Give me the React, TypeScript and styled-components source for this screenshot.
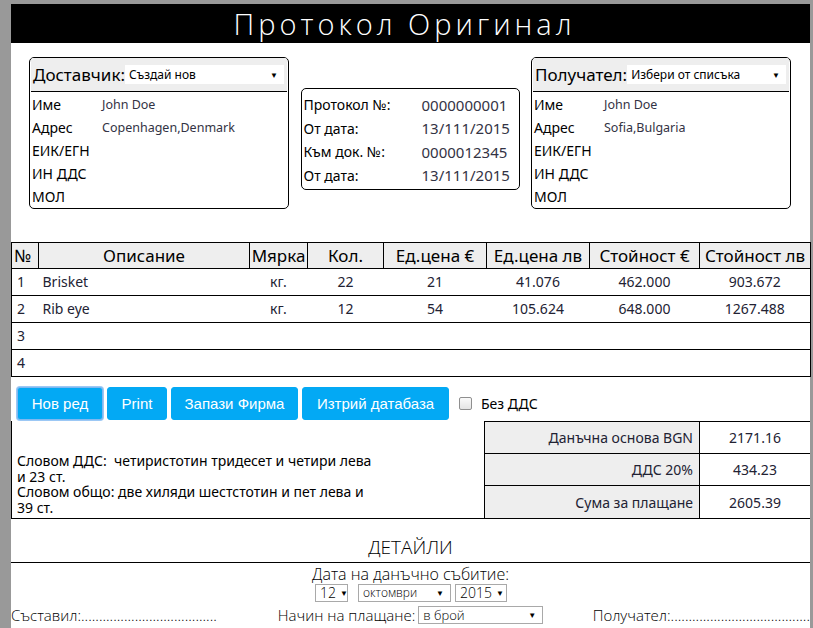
import React from "react";
import styled, { createGlobalStyle } from "styled-components";

const Global = createGlobalStyle`
  html, body { margin: 0; padding: 0; background: #999999; }
  body { font-family: "Noto Sans", "Open Sans", sans-serif; color: #000; overflow: hidden; }
  * { box-sizing: border-box; }
`;

const Page = styled.div`
  width: 799px;
  margin: 4px 0 0 11px;
  background: #fff;
  min-height: 640px;
`;

const TitleBar = styled.div`
  height: 39px;
  background: #000;
  color: #fff;
  display: flex;
  align-items: center;
  justify-content: center;
  padding-right: 12px;
  font-family: "Open Sans", sans-serif;
  font-weight: 300;
  font-size: 29px;
  letter-spacing: 4px;
  line-height: 1;
`;

const TopSection = styled.div`
  display: flex;
  justify-content: space-between;
  align-items: flex-start;
  padding: 14px 19px 33px 18px;
`;

const PartyBox = styled.div`
  width: 260px;
  height: 152px;
  border: 1px solid #000;
  border-radius: 5px;
  overflow: hidden;
`;

const PartyHead = styled.div`
  display: flex;
  align-items: center;
  height: 34px;
  background: #eeeeee;
  border-bottom: 1px solid #000;
  margin: 0 1px;
  padding: 0 3px 0 2px;
`;

const PartyLabel = styled.span`
  font-size: 17px;
  line-height: 1;
`;

const FakeSelect = styled.div<{ $w?: number; $h?: number; $bordered?: boolean; $fs?: number }>`
  display: flex;
  align-items: center;
  justify-content: space-between;
  background: #fff;
  width: ${(p) => (p.$w ? `${p.$w}px` : "auto")};
  flex: ${(p) => (p.$w ? "none" : "1")};
  height: ${(p) => p.$h ?? 19}px;
  border: ${(p) => (p.$bordered ? "1px solid #a9a9a9" : "none")};
  padding: 0 6px 0 4px;
  font-size: ${(p) => p.$fs ?? 12}px;
  line-height: 1;
  color: #000;
  overflow: hidden;
  white-space: nowrap;
`;

const Arrow = styled.span`
  font-family: "Noto Sans", sans-serif;
  font-size: 8px;
  margin-left: 4px;
`;

const InfoRows = styled.div`
  padding: 1px 0 0 2px;
`;

const InfoRow = styled.div<{ $labelW: number; $h: number }>`
  display: grid;
  grid-template-columns: ${(p) => p.$labelW}px 1fr;
  height: ${(p) => p.$h}px;
  align-items: center;
  font-size: 14px;
`;

const InfoValue = styled.span<{ $fs?: number }>`
  color: #333344;
  font-size: ${(p) => p.$fs ?? 12.5}px;
`;

const ProtoBox = styled.div`
  margin-top: 31px;
  width: 219px;
  height: 102px;
  border: 1px solid #000;
  border-radius: 5px;
  padding: 4px 0 0 2px;
`;

const Table = styled.table`
  width: 799px;
  border-collapse: collapse;
  table-layout: fixed;
  border: 1px solid #000;
`;

const Th = styled.th<{ $left?: boolean }>`
  height: 26px;
  padding: 0 ${(p) => (p.$left ? "2px" : "0")};
  background: #eeeeee;
  border: 1px solid #000;
  font-weight: 400;
  font-size: 17px;
  text-align: ${(p) => (p.$left ? "left" : "center")};
  white-space: nowrap;
  overflow: hidden;
  line-height: 1;
`;

const Td = styled.td<{ $align?: string; $pl?: number }>`
  height: 27px;
  border-top: 1px solid #000;
  border-bottom: 1px solid #000;
  padding: 0 0 0 ${(p) => p.$pl ?? 0}px;
  font-size: 14px;
  color: #222233;
  text-align: ${(p) => p.$align ?? "center"};
  line-height: 1;
`;

const ButtonRow = styled.div`
  display: flex;
  align-items: center;
  gap: 4px;
  padding: 10px 0 0 6px;
`;

const Button = styled.button<{ $w: number; $focus?: boolean }>`
  width: ${(p) => p.$w}px;
  height: 33px;
  background: #03a9f4;
  border: 1px solid ${(p) => (p.$focus ? "#7fb8f0" : "#03a9f4")};
  box-shadow: ${(p) => (p.$focus ? "0 0 0 1px #9cc8f5" : "none")};
  border-radius: 3px;
  color: #fff;
  font-family: "Liberation Sans", Arial, sans-serif;
  font-size: 15px;
  padding: 0;
`;

const CheckLabel = styled.label`
  display: flex;
  align-items: center;
  margin-left: 6px;
  font-size: 14px;
  gap: 9px;
`;

const Check = styled.span`
  width: 13px;
  height: 13px;
  border: 1px solid #8f8f8f;
  border-radius: 2px;
  background: linear-gradient(#fafafa, #e4e4e4);
`;

const SumSection = styled.div`
  display: flex;
  align-items: flex-end;
  border-bottom: 1px solid #000;
  border-left: 1px solid #000;
  margin-top: 1px;
`;

const Words = styled.div`
  flex: 1;
  padding: 0 0 3px 5px;
  font-size: 14px;
  line-height: 15.5px;
`;

const WordsInner = styled.div`
  width: 363px;
`;

const Totals = styled.div`
  display: grid;
  grid-template-columns: 215px 110px;
  border-top: 1px solid #000;
  border-left: 1px solid #000;
`;

const TotLabel = styled.div<{ $last?: boolean }>`
  height: 32px;
  background: #eeeeee;
  display: flex;
  align-items: center;
  justify-content: flex-end;
  padding-right: 6px;
  border-right: 1px solid #000;
  border-bottom: ${(p) => (p.$last ? "none" : "1px solid #000")};
  font-size: 14px;
  color: #222233;
`;

const TotValue = styled.div<{ $last?: boolean }>`
  height: 32px;
  display: flex;
  align-items: center;
  justify-content: center;
  border-bottom: ${(p) => (p.$last ? "none" : "1px solid #000")};
  font-size: 14px;
  color: #222233;
`;

const Details = styled.div`
  height: 44px;
  border-bottom: 1px solid #000;
  display: flex;
  align-items: flex-end;
  justify-content: center;
  padding-bottom: 5px;
  font-family: "Open Sans", sans-serif;
  font-weight: 300;
  font-size: 19px;
  line-height: 1;
`;

const Light = styled.div`
  font-family: "Open Sans", sans-serif;
  font-weight: 300;
  font-size: 16px;
  line-height: 1;
`;

const DateBlock = styled(Light)`
  display: flex;
  flex-direction: column;
  align-items: center;
  padding-top: 2px;
`;

const DateLabel = styled.div`
  line-height: 18px;
`;

const SelectRow = styled.div`
  display: flex;
  margin-left: 1px;
  margin-top: 1px;
`;

const Gap = styled.span<{ $w: number }>`
  width: ${(p) => p.$w}px;
`;

const FootRow = styled(Light)`
  display: grid;
  grid-template-columns: 1fr auto 1fr;
  align-items: end;
  margin-top: 4px;
  font-size: 15px;
`;

const FootLeft = styled.div`
  padding-bottom: 1px;
`;

const FootCenter = styled.div`
  display: flex;
  align-items: center;
  gap: 3px;
`;

const FootRight = styled.div`
  text-align: right;
  padding-bottom: 1px;
`;

const infoLabels = ["Име", "Адрес", "ЕИК/ЕГН", "ИН ДДС", "МОЛ"];

function Party({ label, select, values }: { label: string; select: string; values: string[] }) {
  return (
    <PartyBox>
      <PartyHead>
        <PartyLabel>{label}</PartyLabel>
        <FakeSelect>
          <span>{select}</span>
          <Arrow>▼</Arrow>
        </FakeSelect>
      </PartyHead>
      <InfoRows>
        {infoLabels.map((l, i) => (
          <InfoRow key={l} $labelW={70} $h={23}>
            <span>{l}</span>
            <InfoValue>{values[i] ?? ""}</InfoValue>
          </InfoRow>
        ))}
      </InfoRows>
    </PartyBox>
  );
}

const protoRows = [
  ["Протокол №:", "0000000001"],
  ["От дата:", "13/111/2015"],
  ["Към док. №:", "0000012345"],
  ["От дата:", "13/111/2015"],
];

const rows = [
  ["1", "Brisket", "кг.", "22", "21", "41.076", "462.000", "903.672"],
  ["2", "Rib eye", "кг.", "12", "54", "105.624", "648.000", "1267.488"],
  ["3", "", "", "", "", "", "", ""],
  ["4", "", "", "", "", "", "", ""],
];

const colW = [27, 211, 58, 76, 103, 103, 110, 111];
const heads = ["№", "Описание", "Мярка", "Кол.", "Ед.цена €", "Ед.цена лв", "Стойност €", "Стойност лв"];

export default function App() {
  return (
    <>
      <Global />
      <Page>
        <TitleBar>Протокол Оригинал</TitleBar>
        <TopSection>
          <Party label="Доставчик:" select="Създай нов" values={["John Doe", "Copenhagen,Denmark"]} />
          <ProtoBox>
            {protoRows.map(([l, v], i) => (
              <InfoRow key={i} $labelW={118} $h={23.5}>
                <span>{l}</span>
                <InfoValue $fs={15}>{v}</InfoValue>
              </InfoRow>
            ))}
          </ProtoBox>
          <Party label="Получател:" select="Избери от списъка" values={["John Doe", "Sofia,Bulgaria"]} />
        </TopSection>

        <Table>
          <colgroup>
            {colW.map((w, i) => (
              <col key={i} style={{ width: w }} />
            ))}
          </colgroup>
          <thead>
            <tr>
              {heads.map((h, i) => (
                <Th key={h} $left={i === 0}>
                  {h}
                </Th>
              ))}
            </tr>
          </thead>
          <tbody>
            {rows.map((r) => (
              <tr key={r[0]}>
                {r.map((c, i) => (
                  <Td key={i} $align={i < 2 ? "left" : "center"} $pl={i === 0 ? 5 : i === 1 ? 4 : 0}>
                    {c}
                  </Td>
                ))}
              </tr>
            ))}
          </tbody>
        </Table>

        <ButtonRow>
          <Button $w={86} $focus>Нов ред</Button>
          <Button $w={60}>Print</Button>
          <Button $w={127}>Запази Фирма</Button>
          <Button $w={147}>Изтрий датабаза</Button>
          <CheckLabel>
            <Check />
            Без ДДС
          </CheckLabel>
        </ButtonRow>

        <SumSection>
          <Words>
            <WordsInner>
              Словом ДДС:&nbsp; четиристотин тридесет и четири лева и 23 ст.
              <br />
              Словом общо: две хиляди шестстотин и пет лева и 39 ст.
            </WordsInner>
          </Words>
          <Totals>
            <TotLabel>Данъчна основа BGN</TotLabel>
            <TotValue>2171.16</TotValue>
            <TotLabel>ДДС 20%</TotLabel>
            <TotValue>434.23</TotValue>
            <TotLabel $last>Сума за плащане</TotLabel>
            <TotValue $last>2605.39</TotValue>
          </Totals>
        </SumSection>

        <Details>ДЕТАЙЛИ</Details>

        <DateBlock>
          <DateLabel>Дата на данъчно събитие:</DateLabel>
          <SelectRow>
            <FakeSelect $w={33} $h={18} $bordered $fs={14}>
              <span>12</span>
              <Arrow>▼</Arrow>
            </FakeSelect>
            <Gap $w={10} />
            <FakeSelect $w={93} $h={18} $bordered $fs={12}>
              <span>октомври</span>
              <Arrow>▼</Arrow>
            </FakeSelect>
            <Gap $w={4} />
            <FakeSelect $w={52} $h={18} $bordered $fs={14}>
              <span>2015</span>
              <Arrow>▼</Arrow>
            </FakeSelect>
          </SelectRow>
        </DateBlock>

        <FootRow>
          <FootLeft>Съставил:{".".repeat(38)}</FootLeft>
          <FootCenter>
            Начин на плащане:
            <FakeSelect $w={125} $h={18} $bordered $fs={13}>
              <span>в брой</span>
              <Arrow>▼</Arrow>
            </FakeSelect>
          </FootCenter>
          <FootRight>Получател:{".".repeat(39)}</FootRight>
        </FootRow>
      </Page>
    </>
  );
}
